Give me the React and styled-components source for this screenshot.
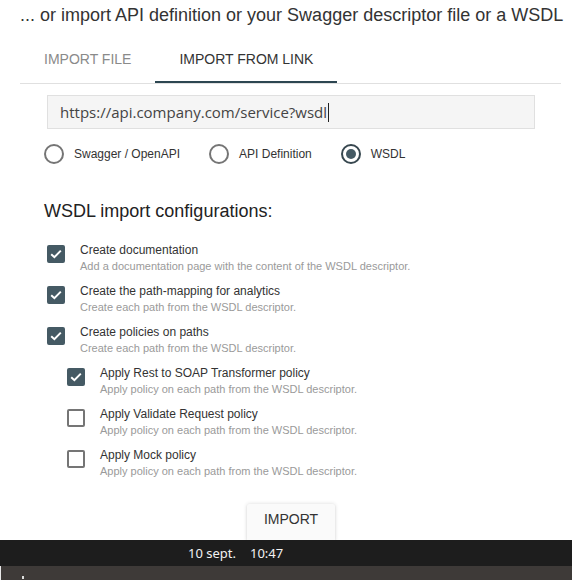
import React from "react";
import styled, { createGlobalStyle } from "styled-components";

const Global = createGlobalStyle`
  html, body { margin: 0; padding: 0; background: #fff; }
  body { font-family: "Liberation Sans", Arial, sans-serif; color: #333; }
  * { box-sizing: border-box; }
`;

const Screen = styled.div`
  height: 580px;
  display: flex;
  flex-direction: column;
  overflow: hidden;
`;

const Main = styled.div`
  flex: 1;
  min-height: 0;
  overflow: hidden;
  padding: 0 11px 0 20px;
  display: flex;
  flex-direction: column;
`;

const Title = styled.h1`
  margin: 0;
  padding-top: 5px;
  font-size: 18px;
  line-height: 20px;
  font-weight: normal;
  color: #333;
  white-space: nowrap;
`;

const TabBar = styled.div`
  margin-top: 10px;
  display: flex;
  border-bottom: 1px solid #e0e0e0;
`;

const Tab = styled.div`
  height: 48px;
  min-width: 135px;
  padding: 1px 24px 0;
  display: flex;
  align-items: center;
  font-size: 14px;
  text-transform: uppercase;
  color: ${(p) => (p.$active ? "#333" : "#8a8a8a")};
  border-bottom: 2px solid ${(p) => (p.$active ? "#2c4651" : "transparent")};
`;

const Body = styled.div`
  padding-left: 24px;
  display: flex;
  flex-direction: column;
`;

const UrlInput = styled.div`
  margin: 11px 26px 0 3px;
  height: 34px;
  background: #f5f5f5;
  border: 1px solid #e0e0e0;
  display: flex;
  align-items: center;
  padding-left: 12px;
  font-family: "Open Sans", sans-serif;
  font-size: 15px;
  color: #444;
`;

const Caret = styled.span`
  display: inline-block;
  width: 1px;
  height: 19px;
  background: #222;
  margin-left: 1px;
`;

const RadioRow = styled.div`
  margin-top: 15px;
  display: flex;
  align-items: center;
  height: 20px;
`;

const RadioItem = styled.label`
  display: flex;
  align-items: center;
  gap: 10px;
  margin-right: 29px;
  font-size: 12px;
  color: #333;
`;

const RadioCircle = styled.span`
  width: 20px;
  height: 20px;
  border-radius: 50%;
  border: 2px solid ${(p) => (p.$checked ? "#37474f" : "#757575")};
  display: flex;
  align-items: center;
  justify-content: center;
  &::after {
    content: "";
    width: 10px;
    height: 10px;
    border-radius: 50%;
    background: ${(p) => (p.$checked ? "#455a64" : "transparent")};
  }
`;

const Heading = styled.h2`
  margin: 36px 0 0;
  font-size: 18px;
  line-height: 22px;
  font-weight: normal;
  color: #222;
`;

const Options = styled.div`
  margin-top: 21px;
  display: flex;
  flex-direction: column;
  gap: 11px;
`;

const Option = styled.div`
  display: flex;
  align-items: flex-start;
  padding-left: ${(p) => (p.$nested ? "23px" : "3px")};
`;

const Box = styled.span`
  flex: none;
  width: 18px;
  height: 18px;
  margin-top: 2px;
  margin-right: 15px;
  border-radius: 2px;
  background: ${(p) => (p.$checked ? "#455a64" : "#fff")};
  border: 2px solid ${(p) => (p.$checked ? "#455a64" : "#757575")};
  display: flex;
  align-items: center;
  justify-content: center;
`;

const OptText = styled.div`
  display: flex;
  flex-direction: column;
  gap: 2px;
`;

const OptTitle = styled.div`
  font-size: 12px;
  line-height: 14px;
  color: #333;
`;

const OptDesc = styled.div`
  font-size: 11px;
  line-height: 14px;
  color: #9a9a9a;
`;

const Actions = styled.div`
  margin-top: 26px;
  display: flex;
  justify-content: center;
  padding-right: 23px;
`;

const ImportButton = styled.button`
  border: none;
  background: #fafafa;
  font-family: "Liberation Sans", Arial, sans-serif;
  font-size: 14px;
  line-height: 18px;
  color: #333;
  padding: 6px 17px 14px;
  box-shadow: 0 0 4px rgba(0, 0, 0, 0.14), 0 1px 2px rgba(0, 0, 0, 0.1);
  border-radius: 2px;
`;

const Taskbar = styled.div`
  flex: none;
  height: 26px;
  background: #1d1d1d;
  display: flex;
  align-items: center;
  padding-left: 188px;
  font-family: "Noto Sans", "DejaVu Sans", sans-serif;
  font-size: 13px;
  color: #f2f2f2;
`;

const Time = styled.span`
  margin-left: 14px;
`;

const Desk = styled.div`
  flex: none;
  height: 14px;
  background: #3e3a38;
  position: relative;
  border-left: 1px solid #e8e8e8;
`;

const Dot = styled.span`
  position: absolute;
  left: 21px;
  bottom: 1px;
  width: 2px;
  height: 3px;
  background: #ddd;
`;

function Check() {
  return (
    <svg width="12" height="10" viewBox="0 0 12 10">
      <path d="M1.2 5.2 L4.4 8.2 L10.8 1.6" fill="none" stroke="#fff" strokeWidth="2" />
    </svg>
  );
}

const options = [
  { t: "Create documentation", d: "Add a documentation page with the content of the WSDL descriptor.", c: true },
  { t: "Create the path-mapping for analytics", d: "Create each path from the WSDL descriptor.", c: true },
  { t: "Create policies on paths", d: "Create each path from the WSDL descriptor.", c: true },
  { t: "Apply Rest to SOAP Transformer policy", d: "Apply policy on each path from the WSDL descriptor.", c: true, n: true },
  { t: "Apply Validate Request policy", d: "Apply policy on each path from the WSDL descriptor.", c: false, n: true },
  { t: "Apply Mock policy", d: "Apply policy on each path from the WSDL descriptor.", c: false, n: true },
];

const radios = [
  { l: "Swagger / OpenAPI", c: false },
  { l: "API Definition", c: false },
  { l: "WSDL", c: true },
];

export default function App() {
  return (
    <>
      <Global />
      <Screen>
        <Main>
          <Title>... or import API definition or your Swagger descriptor file or a WSDL</Title>
          <TabBar>
            <Tab>Import file</Tab>
            <Tab $active>Import from link</Tab>
          </TabBar>
          <Body>
            <UrlInput>
              https://api.company.com/service?wsdl
              <Caret />
            </UrlInput>
            <RadioRow>
              {radios.map((r) => (
                <RadioItem key={r.l}>
                  <RadioCircle $checked={r.c} />
                  {r.l}
                </RadioItem>
              ))}
            </RadioRow>
            <Heading>WSDL import configurations:</Heading>
            <Options>
              {options.map((o) => (
                <Option key={o.t} $nested={o.n}>
                  <Box $checked={o.c}>{o.c && <Check />}</Box>
                  <OptText>
                    <OptTitle>{o.t}</OptTitle>
                    <OptDesc>{o.d}</OptDesc>
                  </OptText>
                </Option>
              ))}
            </Options>
            <Actions>
              <ImportButton>IMPORT</ImportButton>
            </Actions>
          </Body>
        </Main>
        <Taskbar>
          10 sept.<Time>10:47</Time>
        </Taskbar>
        <Desk>
          <Dot />
        </Desk>
      </Screen>
    </>
  );
}
